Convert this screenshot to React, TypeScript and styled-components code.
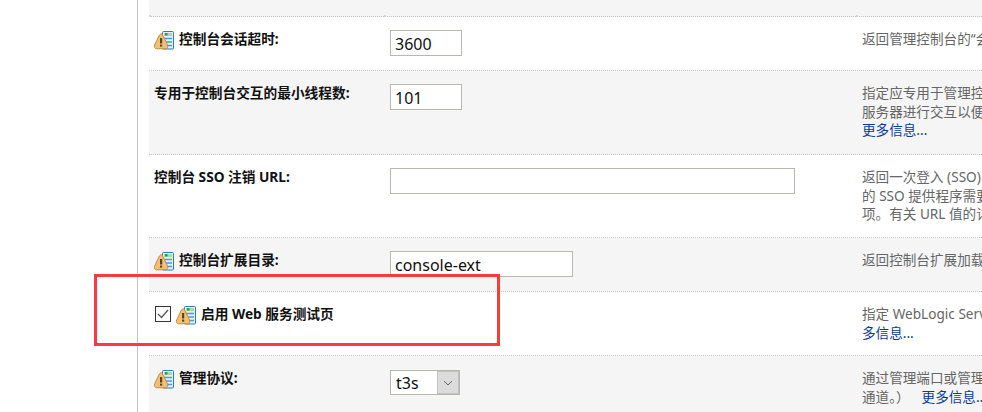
import React, { FC } from 'react';
import styled, { createGlobalStyle } from 'styled-components';

const GlobalStyle = createGlobalStyle`
  html, body {
    margin: 0;
    padding: 0;
    background: #fff;
  }
  body {
    font-family: "Noto Sans", "Noto Sans CJK SC", sans-serif;
  }
`;

const Page = styled.div`
  position: relative;
  display: flex;
  width: 982px;
  height: 412px;
  overflow: hidden;
  background: #fff;
`;

const Sidebar = styled.aside`
  flex: none;
  width: 137px;
  margin-right: 11px;
  border-right: 1px solid #c4c4c4;
`;

const Settings = styled.main`
  flex: none;
  width: 833px;
`;

const Row = styled.div<{ $shaded?: boolean; $last?: boolean }>`
  display: grid;
  grid-template-columns: 235px 472px 126px;
  background: ${(p) => (p.$shaded ? '#f5f5f5' : '#fff')};
  border-bottom: ${(p) => (p.$last ? 'none' : '1px dotted #c6c6c6')};
`;

const TopStrip = styled(Row)`
  height: 16px;
`;

const Corner = styled.div`
  position: relative;
  &::after {
    content: '';
    position: absolute;
    left: 0;
    bottom: -1px;
    width: 2px;
    height: 2px;
    background: #d4d4d4;
  }
`;

const LabelCell = styled.div`
  display: flex;
  align-items: flex-start;
  padding: 13px 0 14px 5px;
`;

const FieldCell = styled.div`
  padding: 13px 0 14px 6px;
`;

const HelpCell = styled.div<{ $compact?: boolean }>`
  padding: 13px 0 ${(p) => (p.$compact ? 13 : 14)}px 6px;
  overflow: hidden;
`;

const Label = styled.label`
  font-size: 13.7px;
  line-height: 18px;
  font-weight: 700;
  color: #111;
  white-space: nowrap;
`;

const HelpLine = styled.div`
  font-size: 13.6px;
  line-height: 18.67px;
  color: #666;
  white-space: nowrap;
`;

const MoreLink = styled.a`
  color: #0a3a9e;
  text-decoration: none;
`;

const TrailingLink = styled(MoreLink)`
  margin-left: 12px;
`;

const TextInput = styled.input<{ $width: number }>`
  display: block;
  box-sizing: border-box;
  width: ${(p) => p.$width}px;
  height: 26px;
  padding: 2px 4px 0;
  border: 1px solid #b8b8b0;
  border-radius: 0;
  background: #fff;
  font-family: "Noto Sans", sans-serif;
  font-size: 16px;
  color: #111;
  outline: none;
`;

const SelectBox = styled.div`
  display: flex;
  box-sizing: border-box;
  width: 70px;
  height: 25px;
  margin-top: 1px;
  border: 1px solid #b8b8b0;
  background: #fff;
`;

const SelectValue = styled.span`
  flex: 1;
  padding-left: 5px;
  font-size: 16px;
  line-height: 24px;
  color: #111;
`;

const SelectArrow = styled.span`
  display: flex;
  align-items: center;
  justify-content: center;
  width: 20px;
  border: 1px solid #c0c0c0;
  background: #dcdcdc;
`;

const CheckBox = styled.span`
  flex: none;
  box-sizing: border-box;
  display: flex;
  align-items: center;
  justify-content: center;
  width: 16px;
  height: 16px;
  margin: 1px 5px 0 1px;
  border: 1px solid #333;
  background: #fff;
`;

const IconBox = styled.svg`
  flex: none;
  width: 20px;
  height: 20px;
  margin-right: 5px;
`;

const ConfigIcon: FC = () => (
  <IconBox viewBox="0 0 20 20">
    <rect x="8.5" y="1.5" width="11" height="17.5" rx="1" fill="#e4f0fa" stroke="#2f7ab8" />
    <rect x="10" y="3" width="8" height="3" fill="#a9d8a5" />
    <rect x="11" y="3" width="2.5" height="2.5" fill="#2f9e44" />
    <path d="M10 8.5h8M10 12h8M10 15.5h8" stroke="#4a9ad8" strokeWidth="1.6" />
    <path
      d="M6.5 4 Q7.5 3.4 8.4 4.6 L13.4 14.5 Q14.6 18.5 11.5 18.8 L2.6 18.8 Q-0.6 18.4 0.7 14.8 L5.4 5 Z"
      fill="#f0c078"
      stroke="#c8893a"
    />
    <rect x="6" y="8" width="2.2" height="5.5" fill="#5e4320" />
    <rect x="6" y="14.6" width="2.2" height="2" fill="#5e4320" />
  </IconBox>
);

const Callout = styled.div`
  position: absolute;
  left: 94px;
  top: 274px;
  width: 406px;
  height: 72px;
  box-sizing: border-box;
  border: 3px solid #fb3b3b;
  pointer-events: none;
`;

const App: FC = () => (
  <>
    <GlobalStyle />
    <Page>
      <Sidebar />
      <Settings>
        <TopStrip $shaded>
          <Corner />
          <Corner />
          <Corner />
        </TopStrip>

        <Row>
          <LabelCell>
            <ConfigIcon />
            <Label>控制台会话超时:</Label>
          </LabelCell>
          <FieldCell>
            <TextInput $width={72} defaultValue="3600" readOnly />
          </FieldCell>
          <HelpCell>
            <HelpLine>返回管理控制台的“会话超时”值。</HelpLine>
          </HelpCell>
        </Row>

        <Row $shaded>
          <LabelCell>
            <Label>专用于控制台交互的最小线程数:</Label>
          </LabelCell>
          <FieldCell>
            <TextInput $width={72} defaultValue="101" readOnly />
          </FieldCell>
          <HelpCell>
            <HelpLine>指定应专用于管理控制台的线程数</HelpLine>
            <HelpLine>服务器进行交互以便管理</HelpLine>
            <HelpLine>
              <MoreLink href="#">更多信息...</MoreLink>
            </HelpLine>
          </HelpCell>
        </Row>

        <Row>
          <LabelCell>
            <Label>控制台 SSO 注销 URL:</Label>
          </LabelCell>
          <FieldCell>
            <TextInput $width={405} defaultValue="" readOnly />
          </FieldCell>
          <HelpCell $compact>
            <HelpLine>返回一次登入 (SSO) 注销 URL</HelpLine>
            <HelpLine>的 SSO 提供程序需要此选项</HelpLine>
            <HelpLine>项。有关 URL 值的详细信息</HelpLine>
          </HelpCell>
        </Row>

        <Row $shaded>
          <LabelCell>
            <ConfigIcon />
            <Label>控制台扩展目录:</Label>
          </LabelCell>
          <FieldCell>
            <TextInput $width={183} defaultValue="console-ext" readOnly />
          </FieldCell>
          <HelpCell>
            <HelpLine>返回控制台扩展加载目录。</HelpLine>
          </HelpCell>
        </Row>

        <Row>
          <LabelCell>
            <CheckBox>
              <svg width="12" height="10" viewBox="0 0 12 10">
                <path d="M1 5 L4.5 8.5 L11 1" fill="none" stroke="#555" strokeWidth="1.2" />
              </svg>
            </CheckBox>
            <ConfigIcon />
            <Label>启用 Web 服务测试页</Label>
          </LabelCell>
          <FieldCell />
          <HelpCell $compact>
            <HelpLine>指定 WebLogic Server 是否</HelpLine>
            <HelpLine>
              <MoreLink href="#">多信息...</MoreLink>
            </HelpLine>
          </HelpCell>
        </Row>

        <Row $shaded $last>
          <LabelCell>
            <ConfigIcon />
            <Label>管理协议:</Label>
          </LabelCell>
          <FieldCell>
            <SelectBox>
              <SelectValue>t3s</SelectValue>
              <SelectArrow>
                <svg width="10" height="6" viewBox="0 0 10 6">
                  <path d="M1 1 L5 5 L9 1" fill="none" stroke="#666" strokeWidth="1" />
                </svg>
              </SelectArrow>
            </SelectBox>
          </FieldCell>
          <HelpCell>
            <HelpLine>通过管理端口或管理通道连接</HelpLine>
            <HelpLine>
              通道。）
              <TrailingLink href="#">更多信息...</TrailingLink>
            </HelpLine>
          </HelpCell>
        </Row>
      </Settings>
      <Callout />
    </Page>
  </>
);

export default App;
